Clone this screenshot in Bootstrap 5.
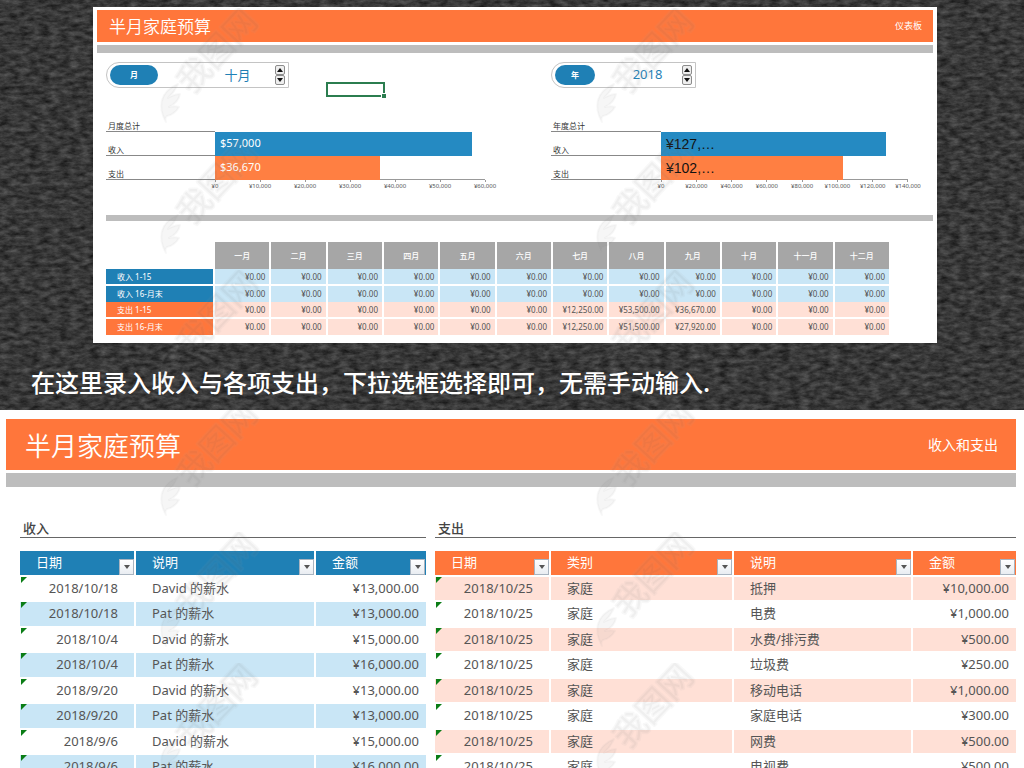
<!DOCTYPE html>
<html lang="zh-CN">
<head>
<meta charset="utf-8">
<meta name="viewport" content="width=device-width, initial-scale=1">
<title>半月家庭预算</title>
<link rel="stylesheet" href="https://cdn.jsdelivr.net/npm/bootstrap@5.3.0/dist/css/bootstrap.min.css">
<style>
:root{--blue:#1f80b5;--sky:#c9e6f6;--orange:#ff763b;--peach:#ffe0d6;--silver:#bdbdbd;--ink:#555}
body{font-family:"Noto Sans","Noto Sans CJK SC",sans-serif;font-size:13px;line-height:16px;color:var(--ink);background:#fff}
h1,h2,h3,p{margin:0;font-weight:400}
.stage{background:#383838;padding:7px 87px 0 93px;height:410px;flex:none}
.grain{position:absolute;inset:0;width:100%;height:100%}
.sheet{background:#fff;height:336px;padding:3px 4px 0}
.banner{background:var(--orange);color:#fff}
.banner h1,.banner h2{font-family:"Noto Sans CJK SC",sans-serif;font-weight:350}
.banner-sm{height:32px;padding:0 11px 0 12px}
.banner-sm h1{font-size:17px;line-height:24px}
.banner-sm span{font-size:9px}
.strip{background:var(--silver)}
.strip-sm{height:8px;margin-top:3px}
.strip-rule{height:6px;margin:21px 0}
.strip-lg{height:14px;margin:3px 0 32px}
.inner{padding-left:9px}
.halves{display:grid;grid-template-columns:445fr 382fr}
.pickers{margin-top:9px}
.charts{margin-top:21px}
.picker{height:26px;border:1px solid #c4c4c4;border-radius:13px 0 0 13px;padding:0 3px;background:#fff}
.picker-month{width:183px}
.picker-year{width:145px}
.pill{border:0;border-radius:10px;background:var(--blue);color:#fff;font-size:8px;font-weight:700;line-height:20px;height:20px;width:48px;padding:0}
.picker-year .pill{width:40px}
.picker input{border:0;background:none;color:var(--blue);text-align:center;min-width:0;flex:1;padding:0;height:20px;margin-bottom:2px}
.picker-month input{padding-left:42px}
.picker-year input{padding-left:18px}
.spin{border:1px solid #8c8c8c;border-radius:2px;background:#eee;width:10px;height:10px;padding:0;display:flex;align-items:center;justify-content:center}
.cell-cursor{width:59px;height:15px;border:2px solid #2b7d4f;margin:20px 0 0 37px;position:relative}
.cell-cursor::after{content:"";position:absolute;right:-3px;bottom:-3px;width:4px;height:4px;background:#2b7d4f;border:solid #fff;box-sizing:content-box;border-width:1px 0 0 1px}
.chart{display:grid;grid-template-columns:109px 270px;grid-template-rows:14px 24px 24px 14px;font-size:8px;color:#333}
.chart-year{grid-template-columns:110px 247px}
.chart h2,.row-name{grid-column:1;font-size:8px;line-height:10px;border-bottom:1px solid #888;padding-left:2px;display:flex;align-items:flex-end}
.bar{height:24px;line-height:22px;font-size:11px;color:#fff;padding-left:5px;background:#258ac2}
.bar-out{background:#ff7f42}
.chart-year .bar{color:#111;font:14px/24px "Liberation Sans",sans-serif}
.plot-last{border-bottom:1px solid #999;height:24px}
.axis{grid-column:2;display:flex;justify-content:space-between;font-size:6px;line-height:8px;color:#555}
.axis span{width:0;display:flex;flex-direction:column;align-items:center;white-space:nowrap}
.axis span::before{content:"";width:1px;height:2px;flex:none;background:#999}
.year-grid{table-layout:fixed;border-collapse:separate;border-spacing:0;font-size:8px;line-height:12px;width:calc(100% - 44px)}
.year-grid thead td{width:107px}
.year-grid thead th{height:27px;text-align:center;vertical-align:middle;font-weight:500;color:#fff;background:#a6a6a6;border-left:2px solid #fff}
.year-grid tbody td,.year-grid tbody th{height:16px;padding:0 4px 0 0;text-align:right}
.year-grid tbody td{border-left:2px solid #fff;background:var(--sky)}
.year-grid tbody th{background:var(--blue);color:#fff;text-align:left;padding-left:11px;font-weight:400}
.year-grid .gap-row>*{border-bottom:2px solid #fff;height:17px}
.year-grid .out td{background:var(--peach)}
.year-grid .out th{background:var(--orange)}
.caption-line{color:#fff;font:500 24px/32px "Noto Sans CJK SC",sans-serif;margin:23px -60px 0 -62px}
.ledger{padding:9px 8px 0 6px}
.banner-lg{height:51px;padding:0 18px 0 19px}
.banner-lg h2{font-size:26px;line-height:36px}
.banner-lg span{font-size:14px}
.books{display:flex;gap:9px;padding-left:14px}
.book-in{flex:406 1 0}
.book-out{flex:581 1 0}
.book h3{font-size:13px;font-weight:500;line-height:18px;color:#444;padding:0 3px;border-bottom:1px solid #666;margin-bottom:13px}
.entries{width:100%;table-layout:fixed;border-collapse:separate;border-spacing:0}
.entries th{padding:0;background:var(--blue);color:#fff;font-weight:400;height:24px;border-right:2px solid #fff;background-clip:padding-box}
.entries th>div{height:24px;display:flex;justify-content:space-between;padding-left:16px;line-height:22px}
.entries td{height:25px;padding:0 16px 2px;border-right:2px solid #fff;border-top:2px solid #fff;background-clip:padding-box;white-space:nowrap}
.entries tr:nth-child(even) td{height:26px}
.entries td:first-child{text-align:right;position:relative}
.entries td:first-child::before{content:"";position:absolute;left:1px;top:0;border-top:6px solid #0b7d16;border-right:6px solid transparent}
.entries td:last-child{text-align:right;padding-right:7px}
.entries td:last-child,.entries th:last-child{border-right:0}
.book-in tbody tr:nth-child(even) td{background-color:var(--sky)}
.book-in th:first-child,.book-in th:last-child{box-shadow:0 2px #bcbcbc}
.book-out th{background-color:var(--orange)}
.book-out tbody tr:nth-child(odd) td{background-color:var(--peach)}
.w-date{width:116px}.w-kind{width:183px}.w-in{width:110px}.w-out{width:103px}
.drop{border:1px solid #a9b4c0;background:linear-gradient(#fff,#e9edf2);width:15px;height:16px;padding:0;display:flex;align-items:center;justify-content:center;align-self:flex-end;flex:none}
.entries th:last-child .drop{margin-right:1px}
.watermark{position:absolute;inset:0;width:100%;height:100%;pointer-events:none}
</style>
</head>
<body class="vh-100 overflow-hidden position-relative d-flex flex-column">
<section class="stage position-relative">
  <svg class="grain" aria-hidden="true">
    <filter id="felt" x="0" y="0" width="100%" height="100%" color-interpolation-filters="sRGB">
      <feTurbulence type="fractalNoise" baseFrequency=".1 .22" numOctaves="4" seed="8"/>
      <feColorMatrix values=".32 0 0 0 .06  .32 0 0 0 .06  .32 0 0 0 .06  0 0 0 0 1"/>
    </filter>
    <rect width="100%" height="100%" filter="url(#felt)"/>
  </svg>
  <div class="sheet position-relative">
    <header class="banner banner-sm d-flex align-items-center justify-content-between"><h1>半月家庭预算</h1><span>仪表板</span></header>
    <div class="strip strip-sm"></div>
    <div class="inner">
      <div class="halves pickers">
        <div class="d-flex align-items-start">
          <div class="picker picker-month d-flex align-items-center">
            <button class="pill" type="button">月</button>
            <input type="text" value="十月" aria-label="月" readonly>
            <div><button class="spin" type="button" aria-label="下个月"><svg width="6" height="4"><path d="M0 4 3 0l3 4z" fill="#111"/></svg></button><button class="spin" type="button" aria-label="上个月"><svg width="6" height="4"><path d="M0 0h6L3 4z" fill="#111"/></svg></button></div>
          </div>
          <div class="cell-cursor"></div>
        </div>
        <div>
          <div class="picker picker-year d-flex align-items-center">
            <button class="pill" type="button">年</button>
            <input type="text" value="2018" aria-label="年" readonly>
            <div><button class="spin" type="button" aria-label="下一年"><svg width="6" height="4"><path d="M0 4 3 0l3 4z" fill="#111"/></svg></button><button class="spin" type="button" aria-label="上一年"><svg width="6" height="4"><path d="M0 0h6L3 4z" fill="#111"/></svg></button></div>
          </div>
        </div>
      </div>
      <div class="halves charts">
        <div class="chart">
          <h2>月度总计</h2>
          <div class="row-name">收入</div><div><div class="bar" style="width:95%">$57,000</div></div>
          <div class="row-name">支出</div><div class="plot-last"><div class="bar bar-out" style="width:61.1%">$36,670</div></div>
          <div class="axis"><span>¥0</span><span>¥10,000</span><span>¥20,000</span><span>¥30,000</span><span>¥40,000</span><span>¥50,000</span><span>¥60,000</span></div>
        </div>
        <div class="chart chart-year">
          <h2>年度总计</h2>
          <div class="row-name">收入</div><div><div class="bar" style="width:91.1%">¥127,…</div></div>
          <div class="row-name">支出</div><div class="plot-last"><div class="bar bar-out" style="width:73.7%">¥102,…</div></div>
          <div class="axis"><span>¥0</span><span>¥20,000</span><span>¥40,000</span><span>¥60,000</span><span>¥80,000</span><span>¥100,000</span><span>¥120,000</span><span>¥140,000</span></div>
        </div>
      </div>
      <div class="strip strip-rule"></div>
      <table class="year-grid">
        <thead><tr><td></td><th>一月</th><th>二月</th><th>三月</th><th>四月</th><th>五月</th><th>六月</th><th>七月</th><th>八月</th><th>九月</th><th>十月</th><th>十一月</th><th>十二月</th></tr></thead>
        <tbody>
          <tr class="gap-row"><th>收入 1-15</th><td>¥0.00</td><td>¥0.00</td><td>¥0.00</td><td>¥0.00</td><td>¥0.00</td><td>¥0.00</td><td>¥0.00</td><td>¥0.00</td><td>¥0.00</td><td>¥0.00</td><td>¥0.00</td><td>¥0.00</td></tr>
          <tr><th>收入 16-月末</th><td>¥0.00</td><td>¥0.00</td><td>¥0.00</td><td>¥0.00</td><td>¥0.00</td><td>¥0.00</td><td>¥0.00</td><td>¥0.00</td><td>¥0.00</td><td>¥0.00</td><td>¥0.00</td><td>¥0.00</td></tr>
          <tr class="out gap-row"><th>支出 1-15</th><td>¥0.00</td><td>¥0.00</td><td>¥0.00</td><td>¥0.00</td><td>¥0.00</td><td>¥0.00</td><td>¥12,250.00</td><td>¥53,500.00</td><td>¥36,670.00</td><td>¥0.00</td><td>¥0.00</td><td>¥0.00</td></tr>
          <tr class="out"><th>支出 16-月末</th><td>¥0.00</td><td>¥0.00</td><td>¥0.00</td><td>¥0.00</td><td>¥0.00</td><td>¥0.00</td><td>¥12,250.00</td><td>¥51,500.00</td><td>¥27,920.00</td><td>¥0.00</td><td>¥0.00</td><td>¥0.00</td></tr>
        </tbody>
      </table>
    </div>
  </div>
  <p class="caption-line position-relative">在这里录入收入与各项支出，下拉选框选择即可，无需手动输入.</p>
</section>

<section class="ledger">
  <header class="banner banner-lg d-flex align-items-center justify-content-between"><h2>半月家庭预算</h2><span>收入和支出</span></header>
  <div class="strip strip-lg"></div>
  <div class="books">
    <div class="book book-in">
      <h3>收入</h3>
      <table class="entries">
        <thead><tr>
          <th class="w-date"><div>日期<button class="drop" type="button" aria-label="筛选日期"><svg width="8" height="5"><path d="M1 0h6L4 4z" fill="#555"/></svg></button></div></th>
          <th><div>说明<button class="drop" type="button" aria-label="筛选说明"><svg width="8" height="5"><path d="M1 0h6L4 4z" fill="#555"/></svg></button></div></th>
          <th class="w-in"><div>金额<button class="drop" type="button" aria-label="筛选金额"><svg width="8" height="5"><path d="M1 0h6L4 4z" fill="#555"/></svg></button></div></th>
        </tr></thead>
        <tbody>
          <tr><td>2018/10/18</td><td>David 的薪水</td><td>¥13,000.00</td></tr>
          <tr><td>2018/10/18</td><td>Pat 的薪水</td><td>¥13,000.00</td></tr>
          <tr><td>2018/10/4</td><td>David 的薪水</td><td>¥15,000.00</td></tr>
          <tr><td>2018/10/4</td><td>Pat 的薪水</td><td>¥16,000.00</td></tr>
          <tr><td>2018/9/20</td><td>David 的薪水</td><td>¥13,000.00</td></tr>
          <tr><td>2018/9/20</td><td>Pat 的薪水</td><td>¥13,000.00</td></tr>
          <tr><td>2018/9/6</td><td>David 的薪水</td><td>¥15,000.00</td></tr>
          <tr><td>2018/9/6</td><td>Pat 的薪水</td><td>¥16,000.00</td></tr>
        </tbody>
      </table>
    </div>
    <div class="book book-out">
      <h3>支出</h3>
      <table class="entries">
        <thead><tr>
          <th class="w-date"><div>日期<button class="drop" type="button" aria-label="筛选日期"><svg width="8" height="5"><path d="M1 0h6L4 4z" fill="#555"/></svg></button></div></th>
          <th class="w-kind"><div>类别<button class="drop" type="button" aria-label="筛选类别"><svg width="8" height="5"><path d="M1 0h6L4 4z" fill="#555"/></svg></button></div></th>
          <th><div>说明<button class="drop" type="button" aria-label="筛选说明"><svg width="8" height="5"><path d="M1 0h6L4 4z" fill="#555"/></svg></button></div></th>
          <th class="w-out"><div>金额<button class="drop" type="button" aria-label="筛选金额"><svg width="8" height="5"><path d="M1 0h6L4 4z" fill="#555"/></svg></button></div></th>
        </tr></thead>
        <tbody>
          <tr><td>2018/10/25</td><td>家庭</td><td>抵押</td><td>¥10,000.00</td></tr>
          <tr><td>2018/10/25</td><td>家庭</td><td>电费</td><td>¥1,000.00</td></tr>
          <tr><td>2018/10/25</td><td>家庭</td><td>水费/排污费</td><td>¥500.00</td></tr>
          <tr><td>2018/10/25</td><td>家庭</td><td>垃圾费</td><td>¥250.00</td></tr>
          <tr><td>2018/10/25</td><td>家庭</td><td>移动电话</td><td>¥1,000.00</td></tr>
          <tr><td>2018/10/25</td><td>家庭</td><td>家庭电话</td><td>¥300.00</td></tr>
          <tr><td>2018/10/25</td><td>家庭</td><td>网费</td><td>¥500.00</td></tr>
          <tr><td>2018/10/25</td><td>家庭</td><td>电视费</td><td>¥500.00</td></tr>
        </tbody>
      </table>
    </div>
  </div>
</section>

<svg class="watermark" aria-hidden="true">
  <defs>
    <pattern id="marks" y="8" width="436" height="131" patternUnits="userSpaceOnUse">
      <g fill="#505050" fill-opacity=".05" stroke="#a0a0a0" stroke-opacity=".07" stroke-width="3" stroke-linejoin="round" paint-order="stroke">
        <text transform="translate(192 87) rotate(-47)" font-family="Noto Sans CJK SC, sans-serif" font-size="33" font-weight="400">我图网</text>
        <path stroke-width="2" d="M166 114c-8-14-7-30 12-38-3 7-6 10-10 14 5-3 8-4 12-4-1 6-5 10-11 13 4-1 7-1 10 0-3 5-7 8-12 9-2 2-2 4-1 6z"/>
      </g>
    </pattern>
  </defs>
  <rect width="100%" height="100%" fill="url(#marks)"/>
</svg>
<script src="https://cdn.jsdelivr.net/npm/bootstrap@5.3.0/dist/js/bootstrap.bundle.min.js"></script>
</body>
</html>
